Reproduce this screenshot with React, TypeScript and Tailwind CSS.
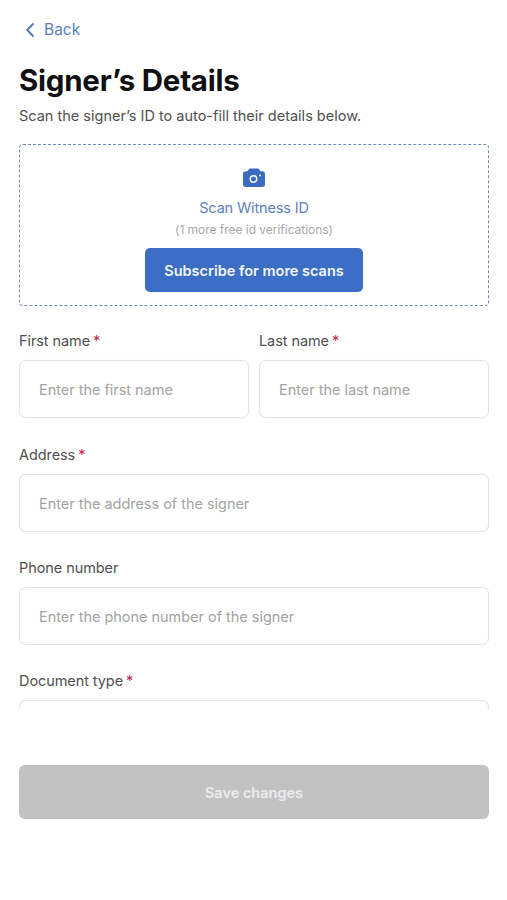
import React from "react";

const font = { fontFamily: '"Inter", "Noto Sans", sans-serif' };

function Field({ label, placeholder, required }: { label: string; placeholder?: string; required?: boolean }) {
  return (
    <div className="flex-1 min-w-0">
      <div className="h-[20px] pt-[1px] text-[14.5px] leading-[20px] tracking-[-0.08px] text-[#505050]">
        {label}
        {required && <span className="ml-[3px] text-[#c8294f]">*</span>}
      </div>
      <div className="mt-[10px] flex h-[58px] items-center rounded-[7px] border border-[#e2e2e2] bg-white pl-[19px] pt-[2px] text-[14.5px] tracking-[-0.03px] text-[#a3a3a3] shadow-[0_0_1px_rgba(0,0,0,0.08)]">
        {placeholder}
      </div>
    </div>
  );
}

export default function App() {
  return (
    <div className="h-[900px] w-[507px] overflow-hidden bg-white pl-[19px] pr-[18px]" style={font}>
      <div className="flex h-[20px] mt-[20px] items-center gap-[9px] pl-[6px] text-[#5a7fbd]">
        <svg width="10" height="16" viewBox="0 0 10 16" fill="none">
          <path d="M8 2 2.2 8 8 14" stroke="#4a76c0" strokeWidth="1.8" strokeLinecap="round" strokeLinejoin="round" />
        </svg>
        <span className="text-[15.5px] leading-[20px]">Back</span>
      </div>

      <h1 className="mt-[23px] text-[29.5px] font-bold leading-[34px] tracking-[-0.25px] text-[#111111]">
        Signer’s Details
      </h1>
      <p className="mt-[9px] text-[14.5px] leading-[20px] text-[#505050]">
        Scan the signer’s ID to auto-fill their details below.
      </p>

      <div className="mt-[18px] flex h-[162px] flex-col items-center rounded-[4px] border-[1.5px] border-dashed border-[#7486bb] pt-[22px]">
        <svg width="24" height="22" viewBox="0 0 24 22" fill="none">
          <path
            d="M8.2 1.500h7.600c.7 0 1.200.3 1.600 1l1 1.700h1.800c1.800 0 2.800 1 2.800 2.800v10.200c0 1.800-1 2.800-2.800 2.800H3.800c-1.800 0-2.800-1-2.800-2.800V7c0-1.800 1-2.800 2.800-2.800h1.800l1-1.700c.4-.7.9-1 1.600-1z"
            fill="#3a6cc0"
          />
          <circle cx="11.500" cy="12" r="3.200" stroke="#ffffff" strokeWidth="1.400" />
          <circle cx="18" cy="8.500" r="0.900" fill="#ffffff" />
        </svg>
        <div className="mt-[9px] text-[14.5px] leading-[20px] tracking-[-0.15px] text-[#5f80bc]">Scan Witness ID</div>
        <div className="mt-[3px] text-[12px] leading-[18px] tracking-[-0.03px] text-[#a8a8a8]">
          (1 more free id verifications)
        </div>
        <button className="mt-[9px] h-[44px] w-[218px] rounded-[5px] bg-[#3b6ec4] pt-[2px] text-[14.5px] font-semibold text-[#f2f5fb]">
          Subscribe for more scans
        </button>
      </div>

      <div className="mt-[24px] h-[379px] overflow-hidden">
        <div className="flex gap-[10px]">
          <Field label="First name" placeholder="Enter the first name" required />
          <Field label="Last name" placeholder="Enter the last name" required />
        </div>
        <div className="mt-[26px] flex">
          <Field label="Address" placeholder="Enter the address of the signer" required />
        </div>
        <div className="mt-[25px] flex">
          <Field label="Phone number" placeholder="Enter the phone number of the signer" />
        </div>
        <div className="mt-[25px] flex">
          <Field label="Document type" required />
        </div>
      </div>

      <button className="mt-[56px] h-[54px] w-full rounded-[6px] bg-[#c2c2c2] pt-[1px] text-[14.5px] font-semibold text-[#ececec]">
        Save changes
      </button>
    </div>
  );
}
